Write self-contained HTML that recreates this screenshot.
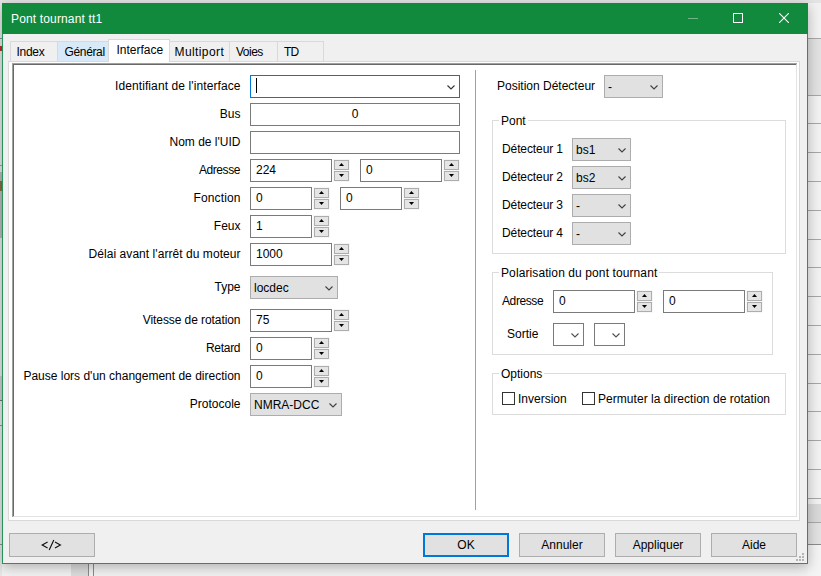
<!DOCTYPE html><html><head><meta charset="utf-8"><style>
*{margin:0;padding:0;box-sizing:border-box}
html,body{width:821px;height:576px;overflow:hidden;background:#e6e6e6}
body{position:relative;font-family:"Liberation Sans",sans-serif;font-size:12px;color:#000}
.a{position:absolute}
.t{position:absolute;font-family:"Liberation Sans",sans-serif;font-size:12px;line-height:14px;white-space:pre;color:#000}
</style></head><body>
<div class="a" style="left:0;top:0;width:821px;height:576px;background:#f2f2f2"></div>
<div class="a" style="left:0;top:0;width:821px;height:3px;background:#e4e4e4"></div>
<div class="a" style="left:808px;top:39px;width:13px;height:56px;background:#e2e2e2"></div>
<div class="a" style="left:808px;top:504px;width:13px;height:18px;background:#d9d9d9"></div>
<div class="a" style="left:808px;top:523px;width:13px;height:21px;background:#e2e2e2"></div>
<div class="a" style="left:808px;top:545px;width:13px;height:31px;background:#f4f4f4"></div>
<div class="a" style="left:808px;top:38px;width:13px;height:1px;background:#a8a8a8"></div>
<div class="a" style="left:808px;top:95px;width:13px;height:1px;background:#a8a8a8"></div>
<div class="a" style="left:808px;top:123px;width:13px;height:1px;background:#a8a8a8"></div>
<div class="a" style="left:808px;top:152px;width:13px;height:1px;background:#a8a8a8"></div>
<div class="a" style="left:808px;top:181px;width:13px;height:1px;background:#a8a8a8"></div>
<div class="a" style="left:808px;top:210px;width:13px;height:1px;background:#a8a8a8"></div>
<div class="a" style="left:808px;top:239px;width:13px;height:1px;background:#a8a8a8"></div>
<div class="a" style="left:808px;top:267px;width:13px;height:1px;background:#a8a8a8"></div>
<div class="a" style="left:808px;top:296px;width:13px;height:1px;background:#a8a8a8"></div>
<div class="a" style="left:808px;top:325px;width:13px;height:1px;background:#a8a8a8"></div>
<div class="a" style="left:808px;top:354px;width:13px;height:1px;background:#a8a8a8"></div>
<div class="a" style="left:808px;top:383px;width:13px;height:1px;background:#a8a8a8"></div>
<div class="a" style="left:808px;top:411px;width:13px;height:1px;background:#a8a8a8"></div>
<div class="a" style="left:808px;top:440px;width:13px;height:1px;background:#a8a8a8"></div>
<div class="a" style="left:808px;top:469px;width:13px;height:1px;background:#a8a8a8"></div>
<div class="a" style="left:808px;top:498px;width:13px;height:1px;background:#a8a8a8"></div>
<div class="a" style="left:808px;top:522px;width:13px;height:1px;background:#a8a8a8"></div>
<div class="a" style="left:808px;top:544px;width:13px;height:1px;background:#8c8c8c"></div>
<div class="a" style="left:71px;top:564px;width:17px;height:12px;background:#dcdcdc"></div>
<div class="a" style="left:88px;top:564px;width:1px;height:12px;background:#8a8a8a"></div>
<div class="a" style="left:93px;top:564px;width:1px;height:12px;background:#8a8a8a"></div>
<div class="a" style="left:0;top:3px;width:2px;height:573px;background:#e6e6e6"></div>
<div class="a" style="left:0;top:38px;width:2px;height:1px;background:#909090"></div>
<div class="a" style="left:0;top:46px;width:2px;height:5px;background:#c03030"></div>
<div class="a" style="left:0;top:165px;width:2px;height:1px;background:#a0a0a0"></div>
<div class="a" style="left:0;top:172px;width:2px;height:66px;background:#b8b8b8"></div>
<div class="a" style="left:0;top:181px;width:2px;height:10px;background:#8a6a40"></div>
<div class="a" style="left:0;top:376px;width:2px;height:24px;background:#cdcdcd"></div>
<div class="a" style="left:0;top:400px;width:2px;height:1px;background:#707070"></div>
<div class="a" style="left:0;top:425px;width:2px;height:1px;background:#909090"></div>
<div class="a" style="left:0;top:544px;width:2px;height:1px;background:#909090"></div>
<div class="a" style="left:2px;top:3px;width:806px;height:561px;box-shadow:0 3px 12px rgba(0,0,0,0.28)"></div>
<div class="a" style="left:2px;top:3px;width:806px;height:561px;background:#26945a;"></div>
<div class="a" style="left:2px;top:3px;width:806px;height:31px;background:#128a3e;"></div>
<div class="a" style="left:3px;top:34px;width:804px;height:529px;background:#f0f0f0;"></div>
<div class="t" style="left:11px;top:12px;letter-spacing:0.15px;color:#fff;">Pont tournant tt1</div>
<div class="a" style="left:688px;top:18px;width:10px;height:1px;background:#6fb58a"></div>
<div class="a" style="left:733px;top:13px;width:10px;height:10px;border:1px solid #fff"></div>
<svg class="a" style="left:779px;top:13px" width="10" height="10" viewBox="0 0 10 10"><path d="M0 0 L10 10 M10 0 L0 10" stroke="#fff" stroke-width="1.1"/></svg>
<div class="a" style="left:8px;top:61px;width:792px;height:460px;border:1px solid #d9d9d9;background:#fff;"></div>
<div class="a" style="left:10px;top:41px;width:48px;height:21px;border:1px solid #d9d9d9;background:#f0f0f0;"></div>
<div class="t" style="left:16.5px;top:45px;letter-spacing:-0.3px;">Index</div>
<div class="a" style="left:57px;top:41px;width:52px;height:21px;border:1px solid #d9d9d9;background:#d8eaf9;"></div>
<div class="t" style="left:64.5px;top:45px;letter-spacing:-0.35px;">Général</div>
<div class="a" style="left:169px;top:41px;width:61px;height:21px;border:1px solid #d9d9d9;background:#f0f0f0;"></div>
<div class="t" style="left:174.5px;top:45px;letter-spacing:0.4px;">Multiport</div>
<div class="a" style="left:229px;top:41px;width:49px;height:21px;border:1px solid #d9d9d9;background:#f0f0f0;"></div>
<div class="t" style="left:236px;top:45px;letter-spacing:-0.5px;">Voies</div>
<div class="a" style="left:277px;top:41px;width:47px;height:21px;border:1px solid #d9d9d9;background:#f0f0f0;"></div>
<div class="t" style="left:284px;top:45px;letter-spacing:-0.8px;">TD</div>
<div class="a" style="left:108px;top:39px;width:62px;height:23px;background:#fff;border:1px solid #d9d9d9;border-bottom:none"></div>
<div class="t" style="left:116.5px;top:43px;">Interface</div>
<div class="a" style="left:12px;top:63px;width:785px;height:454px;border-style:solid;border-width:2px 1px 1px 2px;border-color:#7a7a7a #e3e3e3 #e3e3e3 #7a7a7a"></div>
<div class="a" style="left:12px;top:63px;width:785px;height:1px;background:#a0a0a0"></div>
<div class="a" style="left:12px;top:63px;width:1px;height:454px;background:#a0a0a0"></div>
<div class="a" style="left:13px;top:64px;width:783px;height:1px;background:#696969"></div>
<div class="a" style="left:13px;top:64px;width:1px;height:452px;background:#696969"></div>
<div class="a" style="left:475px;top:70px;width:1px;height:440px;background:#a0a0a0"></div>
<div class="t" style="left:-159.4px;width:400px;text-align:right;top:79px;letter-spacing:0.1px;">Identifiant de l'interface</div>
<div class="a" style="left:250px;top:75px;width:210px;height:23px;border:1px solid #0078d7;background:#fff;"></div>
<div class="a" style="left:256px;top:78px;width:1px;height:15px;background:#000"></div>
<svg class="a" style="left:447px;top:85px" width="9" height="5" viewBox="0 0 9 5"><path d="M0.5 0.5 L4 4 L7.5 0.5" fill="none" stroke="#333" stroke-width="1.1"/></svg>
<div class="t" style="left:-159.5px;width:400px;text-align:right;top:107px;">Bus</div>
<div class="a" style="left:250px;top:103px;width:210px;height:23px;border:1px solid #7a7a7a;background:#fff;"></div>
<div class="t" style="left:250.0px;width:210px;text-align:center;top:107px;">0</div>
<div class="t" style="left:-159.5px;width:400px;text-align:right;top:135px;">Nom de l'UID</div>
<div class="a" style="left:250px;top:131px;width:210px;height:23px;border:1px solid #7a7a7a;background:#fff;"></div>
<div class="t" style="left:-159.9px;width:400px;text-align:right;top:163px;letter-spacing:-0.4px;">Adresse</div>
<div class="a" style="left:250px;top:159px;width:82px;height:23px;border:1px solid #7a7a7a;background:#fff;"></div>
<div class="t" style="left:256px;top:163px;">224</div>
<div class="a" style="left:333px;top:159px;width:17px;height:23px;background:#f7f7f7"></div>
<div class="a" style="left:334px;top:160px;width:15px;height:10px;border:1px solid #adadad;background:#e5e5e5;"></div>
<div class="a" style="left:334px;top:171px;width:15px;height:10px;border:1px solid #adadad;background:#e5e5e5;"></div>
<svg class="a" style="left:339px;top:163px" width="5" height="3" viewBox="0 0 5 3"><path d="M2.5 0 L5 3 L0 3 Z" fill="#000"/></svg>
<svg class="a" style="left:339px;top:174px" width="5" height="3" viewBox="0 0 5 3"><path d="M0 0 L5 0 L2.5 3 Z" fill="#000"/></svg>
<div class="a" style="left:360px;top:159px;width:82px;height:23px;border:1px solid #7a7a7a;background:#fff;"></div>
<div class="t" style="left:366px;top:163px;">0</div>
<div class="a" style="left:443px;top:159px;width:17px;height:23px;background:#f7f7f7"></div>
<div class="a" style="left:444px;top:160px;width:15px;height:10px;border:1px solid #adadad;background:#e5e5e5;"></div>
<div class="a" style="left:444px;top:171px;width:15px;height:10px;border:1px solid #adadad;background:#e5e5e5;"></div>
<svg class="a" style="left:449px;top:163px" width="5" height="3" viewBox="0 0 5 3"><path d="M2.5 0 L5 3 L0 3 Z" fill="#000"/></svg>
<svg class="a" style="left:449px;top:174px" width="5" height="3" viewBox="0 0 5 3"><path d="M0 0 L5 0 L2.5 3 Z" fill="#000"/></svg>
<div class="t" style="left:-159.36px;width:400px;text-align:right;top:191px;letter-spacing:0.14px;">Fonction</div>
<div class="a" style="left:250px;top:187px;width:62px;height:23px;border:1px solid #7a7a7a;background:#fff;"></div>
<div class="t" style="left:256px;top:191px;">0</div>
<div class="a" style="left:313px;top:187px;width:17px;height:23px;background:#f7f7f7"></div>
<div class="a" style="left:314px;top:188px;width:15px;height:10px;border:1px solid #adadad;background:#e5e5e5;"></div>
<div class="a" style="left:314px;top:199px;width:15px;height:10px;border:1px solid #adadad;background:#e5e5e5;"></div>
<svg class="a" style="left:319px;top:191px" width="5" height="3" viewBox="0 0 5 3"><path d="M2.5 0 L5 3 L0 3 Z" fill="#000"/></svg>
<svg class="a" style="left:319px;top:202px" width="5" height="3" viewBox="0 0 5 3"><path d="M0 0 L5 0 L2.5 3 Z" fill="#000"/></svg>
<div class="a" style="left:340px;top:187px;width:62px;height:23px;border:1px solid #7a7a7a;background:#fff;"></div>
<div class="t" style="left:346px;top:191px;">0</div>
<div class="a" style="left:403px;top:187px;width:17px;height:23px;background:#f7f7f7"></div>
<div class="a" style="left:404px;top:188px;width:15px;height:10px;border:1px solid #adadad;background:#e5e5e5;"></div>
<div class="a" style="left:404px;top:199px;width:15px;height:10px;border:1px solid #adadad;background:#e5e5e5;"></div>
<svg class="a" style="left:409px;top:191px" width="5" height="3" viewBox="0 0 5 3"><path d="M2.5 0 L5 3 L0 3 Z" fill="#000"/></svg>
<svg class="a" style="left:409px;top:202px" width="5" height="3" viewBox="0 0 5 3"><path d="M0 0 L5 0 L2.5 3 Z" fill="#000"/></svg>
<div class="t" style="left:-159.5px;width:400px;text-align:right;top:219px;">Feux</div>
<div class="a" style="left:250px;top:215px;width:62px;height:23px;border:1px solid #7a7a7a;background:#fff;"></div>
<div class="t" style="left:256px;top:219px;">1</div>
<div class="a" style="left:313px;top:215px;width:17px;height:23px;background:#f7f7f7"></div>
<div class="a" style="left:314px;top:216px;width:15px;height:10px;border:1px solid #adadad;background:#e5e5e5;"></div>
<div class="a" style="left:314px;top:227px;width:15px;height:10px;border:1px solid #adadad;background:#e5e5e5;"></div>
<svg class="a" style="left:319px;top:219px" width="5" height="3" viewBox="0 0 5 3"><path d="M2.5 0 L5 3 L0 3 Z" fill="#000"/></svg>
<svg class="a" style="left:319px;top:230px" width="5" height="3" viewBox="0 0 5 3"><path d="M0 0 L5 0 L2.5 3 Z" fill="#000"/></svg>
<div class="t" style="left:-159.445px;width:400px;text-align:right;top:247px;letter-spacing:0.055px;">Délai avant l'arrêt du moteur</div>
<div class="a" style="left:250px;top:243px;width:82px;height:23px;border:1px solid #7a7a7a;background:#fff;"></div>
<div class="t" style="left:256px;top:247px;">1000</div>
<div class="a" style="left:333px;top:243px;width:17px;height:23px;background:#f7f7f7"></div>
<div class="a" style="left:334px;top:244px;width:15px;height:10px;border:1px solid #adadad;background:#e5e5e5;"></div>
<div class="a" style="left:334px;top:255px;width:15px;height:10px;border:1px solid #adadad;background:#e5e5e5;"></div>
<svg class="a" style="left:339px;top:247px" width="5" height="3" viewBox="0 0 5 3"><path d="M2.5 0 L5 3 L0 3 Z" fill="#000"/></svg>
<svg class="a" style="left:339px;top:258px" width="5" height="3" viewBox="0 0 5 3"><path d="M0 0 L5 0 L2.5 3 Z" fill="#000"/></svg>
<div class="t" style="left:-159.5px;width:400px;text-align:right;top:280px;">Type</div>
<div class="a" style="left:250px;top:276px;width:88px;height:23px;border:1px solid #adadad;background:#e1e1e1;"></div>
<div class="t" style="left:254px;top:281px;">locdec</div>
<svg class="a" style="left:325px;top:286px" width="9" height="5" viewBox="0 0 9 5"><path d="M0.5 0.5 L4 4 L7.5 0.5" fill="none" stroke="#404040" stroke-width="1.1"/></svg>
<div class="t" style="left:-159.58px;width:400px;text-align:right;top:313px;letter-spacing:-0.08px;">Vitesse de rotation</div>
<div class="a" style="left:250px;top:309px;width:82px;height:23px;border:1px solid #7a7a7a;background:#fff;"></div>
<div class="t" style="left:256px;top:313px;">75</div>
<div class="a" style="left:333px;top:309px;width:17px;height:23px;background:#f7f7f7"></div>
<div class="a" style="left:334px;top:310px;width:15px;height:10px;border:1px solid #adadad;background:#e5e5e5;"></div>
<div class="a" style="left:334px;top:321px;width:15px;height:10px;border:1px solid #adadad;background:#e5e5e5;"></div>
<svg class="a" style="left:339px;top:313px" width="5" height="3" viewBox="0 0 5 3"><path d="M2.5 0 L5 3 L0 3 Z" fill="#000"/></svg>
<svg class="a" style="left:339px;top:324px" width="5" height="3" viewBox="0 0 5 3"><path d="M0 0 L5 0 L2.5 3 Z" fill="#000"/></svg>
<div class="t" style="left:-159.8px;width:400px;text-align:right;top:341px;letter-spacing:-0.3px;">Retard</div>
<div class="a" style="left:250px;top:337px;width:62px;height:23px;border:1px solid #7a7a7a;background:#fff;"></div>
<div class="t" style="left:256px;top:341px;">0</div>
<div class="a" style="left:313px;top:337px;width:17px;height:23px;background:#f7f7f7"></div>
<div class="a" style="left:314px;top:338px;width:15px;height:10px;border:1px solid #adadad;background:#e5e5e5;"></div>
<div class="a" style="left:314px;top:349px;width:15px;height:10px;border:1px solid #adadad;background:#e5e5e5;"></div>
<svg class="a" style="left:319px;top:341px" width="5" height="3" viewBox="0 0 5 3"><path d="M2.5 0 L5 3 L0 3 Z" fill="#000"/></svg>
<svg class="a" style="left:319px;top:352px" width="5" height="3" viewBox="0 0 5 3"><path d="M0 0 L5 0 L2.5 3 Z" fill="#000"/></svg>
<div class="t" style="left:-159.5px;width:400px;text-align:right;top:369px;">Pause lors d'un changement de direction</div>
<div class="a" style="left:250px;top:365px;width:62px;height:23px;border:1px solid #7a7a7a;background:#fff;"></div>
<div class="t" style="left:256px;top:369px;">0</div>
<div class="a" style="left:313px;top:365px;width:17px;height:23px;background:#f7f7f7"></div>
<div class="a" style="left:314px;top:366px;width:15px;height:10px;border:1px solid #adadad;background:#e5e5e5;"></div>
<div class="a" style="left:314px;top:377px;width:15px;height:10px;border:1px solid #adadad;background:#e5e5e5;"></div>
<svg class="a" style="left:319px;top:369px" width="5" height="3" viewBox="0 0 5 3"><path d="M2.5 0 L5 3 L0 3 Z" fill="#000"/></svg>
<svg class="a" style="left:319px;top:380px" width="5" height="3" viewBox="0 0 5 3"><path d="M0 0 L5 0 L2.5 3 Z" fill="#000"/></svg>
<div class="t" style="left:-159.5px;width:400px;text-align:right;top:397px;">Protocole</div>
<div class="a" style="left:250px;top:393px;width:92px;height:23px;border:1px solid #adadad;background:#e1e1e1;"></div>
<div class="t" style="left:254px;top:398px;">NMRA-DCC</div>
<svg class="a" style="left:329px;top:403px" width="9" height="5" viewBox="0 0 9 5"><path d="M0.5 0.5 L4 4 L7.5 0.5" fill="none" stroke="#404040" stroke-width="1.1"/></svg>
<div class="t" style="left:497px;top:79px;">Position Détecteur</div>
<div class="a" style="left:604px;top:75px;width:59px;height:23px;border:1px solid #adadad;background:#e1e1e1;"></div>
<div class="t" style="left:608px;top:80px;">-</div>
<svg class="a" style="left:650px;top:85px" width="9" height="5" viewBox="0 0 9 5"><path d="M0.5 0.5 L4 4 L7.5 0.5" fill="none" stroke="#404040" stroke-width="1.1"/></svg>
<div class="a" style="left:492px;top:120px;width:294px;height:134px;border:1px solid #dcdcdc;"></div>
<div class="t" style="left:499px;top:114px;background:#fff;padding:0 2px;">Pont</div>
<div class="t" style="left:502px;top:142px;letter-spacing:-0.1px;">Détecteur 1</div>
<div class="a" style="left:572px;top:138px;width:59px;height:23px;border:1px solid #adadad;background:#e1e1e1;"></div>
<div class="t" style="left:576px;top:143px;">bs1</div>
<svg class="a" style="left:618px;top:148px" width="9" height="5" viewBox="0 0 9 5"><path d="M0.5 0.5 L4 4 L7.5 0.5" fill="none" stroke="#404040" stroke-width="1.1"/></svg>
<div class="t" style="left:502px;top:170px;letter-spacing:-0.1px;">Détecteur 2</div>
<div class="a" style="left:572px;top:166px;width:59px;height:23px;border:1px solid #adadad;background:#e1e1e1;"></div>
<div class="t" style="left:576px;top:171px;">bs2</div>
<svg class="a" style="left:618px;top:176px" width="9" height="5" viewBox="0 0 9 5"><path d="M0.5 0.5 L4 4 L7.5 0.5" fill="none" stroke="#404040" stroke-width="1.1"/></svg>
<div class="t" style="left:502px;top:198px;letter-spacing:-0.1px;">Détecteur 3</div>
<div class="a" style="left:572px;top:194px;width:59px;height:23px;border:1px solid #adadad;background:#e1e1e1;"></div>
<div class="t" style="left:576px;top:199px;">-</div>
<svg class="a" style="left:618px;top:204px" width="9" height="5" viewBox="0 0 9 5"><path d="M0.5 0.5 L4 4 L7.5 0.5" fill="none" stroke="#404040" stroke-width="1.1"/></svg>
<div class="t" style="left:502px;top:226px;letter-spacing:-0.1px;">Détecteur 4</div>
<div class="a" style="left:572px;top:222px;width:59px;height:23px;border:1px solid #adadad;background:#e1e1e1;"></div>
<div class="t" style="left:576px;top:227px;">-</div>
<svg class="a" style="left:618px;top:232px" width="9" height="5" viewBox="0 0 9 5"><path d="M0.5 0.5 L4 4 L7.5 0.5" fill="none" stroke="#404040" stroke-width="1.1"/></svg>
<div class="a" style="left:492px;top:272px;width:281px;height:83px;border:1px solid #dcdcdc;"></div>
<div class="t" style="left:499px;top:266px;background:#fff;padding:0 2px;letter-spacing:0.1px;">Polarisation du pont tournant</div>
<div class="t" style="left:502px;top:294px;letter-spacing:-0.4px;">Adresse</div>
<div class="a" style="left:553px;top:290px;width:82px;height:23px;border:1px solid #7a7a7a;background:#fff;"></div>
<div class="t" style="left:559px;top:294px;">0</div>
<div class="a" style="left:636px;top:290px;width:17px;height:23px;background:#f7f7f7"></div>
<div class="a" style="left:637px;top:291px;width:15px;height:10px;border:1px solid #adadad;background:#e5e5e5;"></div>
<div class="a" style="left:637px;top:302px;width:15px;height:10px;border:1px solid #adadad;background:#e5e5e5;"></div>
<svg class="a" style="left:642px;top:294px" width="5" height="3" viewBox="0 0 5 3"><path d="M2.5 0 L5 3 L0 3 Z" fill="#000"/></svg>
<svg class="a" style="left:642px;top:305px" width="5" height="3" viewBox="0 0 5 3"><path d="M0 0 L5 0 L2.5 3 Z" fill="#000"/></svg>
<div class="a" style="left:663px;top:290px;width:82px;height:23px;border:1px solid #7a7a7a;background:#fff;"></div>
<div class="t" style="left:669px;top:294px;">0</div>
<div class="a" style="left:746px;top:290px;width:17px;height:23px;background:#f7f7f7"></div>
<div class="a" style="left:747px;top:291px;width:15px;height:10px;border:1px solid #adadad;background:#e5e5e5;"></div>
<div class="a" style="left:747px;top:302px;width:15px;height:10px;border:1px solid #adadad;background:#e5e5e5;"></div>
<svg class="a" style="left:752px;top:294px" width="5" height="3" viewBox="0 0 5 3"><path d="M2.5 0 L5 3 L0 3 Z" fill="#000"/></svg>
<svg class="a" style="left:752px;top:305px" width="5" height="3" viewBox="0 0 5 3"><path d="M0 0 L5 0 L2.5 3 Z" fill="#000"/></svg>
<div class="t" style="left:507px;top:327px;">Sortie</div>
<div class="a" style="left:553px;top:323px;width:31px;height:23px;border:1px solid #7a7a7a;background:#fff;"></div>
<svg class="a" style="left:571px;top:333px" width="9" height="5" viewBox="0 0 9 5"><path d="M0.5 0.5 L4 4 L7.5 0.5" fill="none" stroke="#505050" stroke-width="1.1"/></svg>
<div class="a" style="left:594px;top:323px;width:31px;height:23px;border:1px solid #7a7a7a;background:#fff;"></div>
<svg class="a" style="left:612px;top:333px" width="9" height="5" viewBox="0 0 9 5"><path d="M0.5 0.5 L4 4 L7.5 0.5" fill="none" stroke="#505050" stroke-width="1.1"/></svg>
<div class="a" style="left:492px;top:373px;width:294px;height:42px;border:1px solid #dcdcdc;"></div>
<div class="t" style="left:499px;top:367px;background:#fff;padding:0 2px;">Options</div>
<div class="a" style="left:502px;top:392px;width:13px;height:13px;border:1px solid #333;background:#fff;"></div>
<div class="t" style="left:518px;top:392px;">Inversion</div>
<div class="a" style="left:582px;top:392px;width:13px;height:13px;border:1px solid #333;background:#fff;"></div>
<div class="t" style="left:598px;top:392px;letter-spacing:0.04px;">Permuter la direction de rotation</div>
<div class="a" style="left:9px;top:533px;width:86px;height:24px;border:1px solid #adadad;background:#e1e1e1;"></div>
<svg class="a" style="left:38px;top:538px" width="26" height="14" viewBox="38 538 26 14"><path d="M47.6 542 L42.2 545 L47.6 548 M53.8 540 L49.2 550 M55 542 L60.4 545 L55 548" fill="none" stroke="#111" stroke-width="1.15"/></svg>
<div class="a" style="left:423px;top:533px;width:86px;height:24px;border:2px solid #0078d7;background:#e1e1e1"></div>
<div class="t" style="left:423.0px;width:86px;text-align:center;top:538px;">OK</div>
<div class="a" style="left:519px;top:533px;width:86px;height:24px;border:1px solid #adadad;background:#e1e1e1;"></div>
<div class="t" style="left:519.0px;width:86px;text-align:center;top:538px;">Annuler</div>
<div class="a" style="left:615px;top:533px;width:86px;height:24px;border:1px solid #adadad;background:#e1e1e1;"></div>
<div class="t" style="left:615.0px;width:86px;text-align:center;top:538px;">Appliquer</div>
<div class="a" style="left:711px;top:533px;width:86px;height:24px;border:1px solid #adadad;background:#e1e1e1;"></div>
<div class="t" style="left:711.0px;width:86px;text-align:center;top:538px;">Aide</div>
<div class="a" style="left:802px;top:553px;width:2px;height:2px;background:#b4b4b4"></div>
<div class="a" style="left:799px;top:556px;width:2px;height:2px;background:#b4b4b4"></div>
<div class="a" style="left:802px;top:556px;width:2px;height:2px;background:#b4b4b4"></div>
<div class="a" style="left:796px;top:559px;width:2px;height:2px;background:#b4b4b4"></div>
<div class="a" style="left:799px;top:559px;width:2px;height:2px;background:#b4b4b4"></div>
<div class="a" style="left:802px;top:559px;width:2px;height:2px;background:#b4b4b4"></div>
</body></html>
